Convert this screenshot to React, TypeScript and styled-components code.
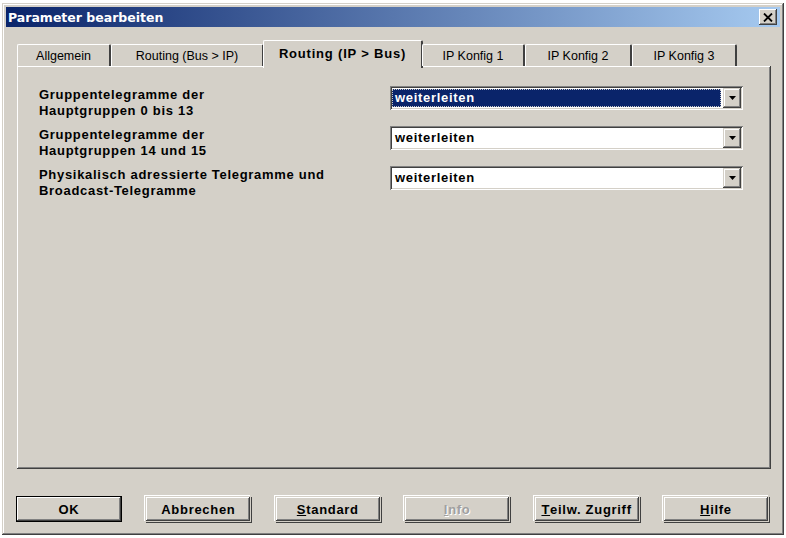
import styled, { createGlobalStyle } from 'styled-components'

// global
const GlobalStyle = createGlobalStyle`
  html, body {
    margin: 0;
    padding: 0;
    background: #ffffff;
  }
  body {
    font-family: 'Liberation Sans', Arial, sans-serif;
  }
`

// data
const tabs = [
  { label: 'Allgemein', width: 94 },
  { label: 'Routing (Bus > IP)', width: 153 },
  { label: 'Routing (IP > Bus)', width: 160, active: true },
  { label: 'IP Konfig 1', width: 103 },
  { label: 'IP Konfig 2', width: 107 },
  { label: 'IP Konfig 3', width: 105 },
]

const rows = [
  { label: ['Gruppentelegramme der', 'Hauptgruppen 0 bis 13'], value: 'weiterleiten', selected: true },
  { label: ['Gruppentelegramme der', 'Hauptgruppen 14 und 15'], value: 'weiterleiten' },
  { label: ['Physikalisch adressierte Telegramme und', 'Broadcast-Telegramme'], value: 'weiterleiten' },
]

// styled
const Window = styled.div`
  box-sizing: border-box;
  width: 782px;
  height: 532px;
  margin: 3px 0 0 2px;
  padding: 4px;
  background: #d4d0c8;
  box-shadow: inset -1px -1px #404040, inset 1px 1px #d4d0c8,
    inset -2px -2px #808080, inset 2px 2px #ffffff;
  display: flex;
  flex-direction: column;
`

const TitleBar = styled.div`
  height: 20px;
  display: flex;
  align-items: center;
  justify-content: space-between;
  padding: 0 3px 0 2px;
  background: linear-gradient(to right, #0a246a, #a6caf0);
`

const Title = styled.span`
  color: #ffffff;
  font-family: 'DejaVu Sans', sans-serif;
  font-weight: bold;
  font-size: 12.5px;
`

const CloseButton = styled.div`
  box-sizing: border-box;
  width: 18px;
  height: 16px;
  background: #d4d0c8;
  box-shadow: inset -1px -1px #404040, inset 1px 1px #ffffff,
    inset -2px -2px #808080;
  display: flex;
  align-items: center;
  justify-content: center;
`

const Content = styled.div`
  flex: 1;
  display: flex;
  flex-direction: column;
  padding: 15px 9px 0 11px;
`

const TabStrip = styled.div`
  display: flex;
  align-items: flex-end;
  height: 24px;
  position: relative;
  z-index: 1;
`

const Tab = styled.div<{ $active?: boolean; $width: number }>`
  box-sizing: border-box;
  width: ${(p) => p.$width}px;
  height: ${(p) => (p.$active ? 28 : 22)}px;
  margin: ${(p) => (p.$active ? '0 -1px -2px -1px' : '0')};
  padding-top: ${(p) => (p.$active ? 4 : 2)}px;
  background: #d4d0c8;
  border-top: 1px solid #ffffff;
  border-left: 1px solid #ffffff;
  border-right: 2px solid #404040;
  border-radius: 2px 2px 0 0;
  text-align: center;
  font-size: ${(p) => (p.$active ? 13 : 12.5)}px;
  letter-spacing: ${(p) => (p.$active ? 0.8 : 0)}px;
  line-height: 18px;
  font-weight: ${(p) => (p.$active ? 'bold' : 'normal')};
  color: #000000;
`

const Panel = styled.div`
  box-sizing: border-box;
  height: 403px;
  padding: 20px 20px 0 22px;
  background: #d4d0c8;
  box-shadow: inset -1px -1px #404040, inset 1px 1px #ffffff,
    inset -2px -2px #808080;
  display: flex;
  flex-direction: column;
  gap: 7px;
`

const Row = styled.div`
  display: grid;
  grid-template-columns: 351px 353px;
  align-items: start;
`

const Label = styled.div`
  margin-top: 1px;
  font-weight: bold;
  font-size: 13px;
  letter-spacing: 0.7px;
  line-height: 16px;
  color: #000000;
`

const Combo = styled.div`
  box-sizing: border-box;
  height: 24px;
  padding: 2px;
  background: #ffffff;
  box-shadow: inset 1px 1px #808080, inset -1px -1px #ffffff,
    inset 2px 2px #404040, inset -2px -2px #d4d0c8;
  display: flex;
  align-items: center;
  gap: 2px;
`

const ComboValue = styled.div<{ $selected?: boolean }>`
  flex: 1;
  height: 18px;
  padding-left: 3px;
  font-weight: bold;
  font-size: 13px;
  letter-spacing: 0.7px;
  line-height: 18px;
  color: ${(p) => (p.$selected ? '#ffffff' : '#000000')};
  background: ${(p) => (p.$selected ? '#0a246a' : 'transparent')};
  outline: ${(p) => (p.$selected ? '1px dotted #c8c8c8' : 'none')};
  outline-offset: -1px;
`

const DropButton = styled.div`
  box-sizing: border-box;
  width: 18px;
  height: 20px;
  background: #d4d0c8;
  box-shadow: inset -1px -1px #404040, inset 1px 1px #d4d0c8,
    inset -2px -2px #808080, inset 2px 2px #ffffff;
  display: flex;
  align-items: center;
  justify-content: center;
`

const Footer = styled.div`
  display: flex;
  justify-content: space-between;
  margin: 27px 2px 0 -1px;
`

const Button = styled.div<{ $default?: boolean; $disabled?: boolean }>`
  box-sizing: border-box;
  width: 106px;
  height: 26px;
  display: flex;
  align-items: center;
  justify-content: center;
  font-weight: bold;
  font-size: 13px;
  letter-spacing: 0.7px;
  color: ${(p) => (p.$disabled ? '#a0a0a0' : '#000000')};
  text-shadow: ${(p) => (p.$disabled ? '1px 1px #ffffff' : 'none')};
  background: #d4d0c8;
  border: 1px solid ${(p) => (p.$default ? '#000000' : 'transparent')};
  box-shadow: ${(p) =>
    p.$default
      ? 'inset -1px -1px #404040, inset 1px 1px #ffffff, inset -2px -2px #808080'
      : 'inset -1px -1px #404040, inset 1px 1px #ffffff, inset -2px -2px #808080, -1px -1px #ffffff, 1px 1px #404040'};
`

const Key = styled.span`
  text-decoration: underline;
`

// component
const App = () => {
  return (
    <>
      <GlobalStyle />
      <Window>
        <TitleBar>
          <Title>Parameter bearbeiten</Title>
          <CloseButton>
            <svg width='10' height='9' viewBox='0 0 10 9'>
              <path d='M1 0.5 L9 8.5 M9 0.5 L1 8.5' stroke='#000' strokeWidth='1.8' />
            </svg>
          </CloseButton>
        </TitleBar>
        <Content>
          <TabStrip>
            {tabs.map((tab) => (
              <Tab key={tab.label} $active={tab.active} $width={tab.width}>
                {tab.label}
              </Tab>
            ))}
          </TabStrip>
          <Panel>
            {rows.map((row, i) => (
              <Row key={i}>
                <Label>
                  {row.label[0]}
                  <br />
                  {row.label[1]}
                </Label>
                <Combo>
                  <ComboValue $selected={row.selected}>{row.value}</ComboValue>
                  <DropButton>
                    <svg width='7' height='4' viewBox='0 0 7 4'>
                      <path d='M0 0 H7 L3.5 4 Z' fill='#000' />
                    </svg>
                  </DropButton>
                </Combo>
              </Row>
            ))}
          </Panel>
          <Footer>
            <Button $default>OK</Button>
            <Button>Abbrechen</Button>
            <Button>
              <Key>S</Key>tandard
            </Button>
            <Button $disabled>
              <Key>I</Key>nfo
            </Button>
            <Button>
              <Key>T</Key>eilw. Zugriff
            </Button>
            <Button>
              <Key>H</Key>ilfe
            </Button>
          </Footer>
        </Content>
      </Window>
    </>
  )
}

export default App
